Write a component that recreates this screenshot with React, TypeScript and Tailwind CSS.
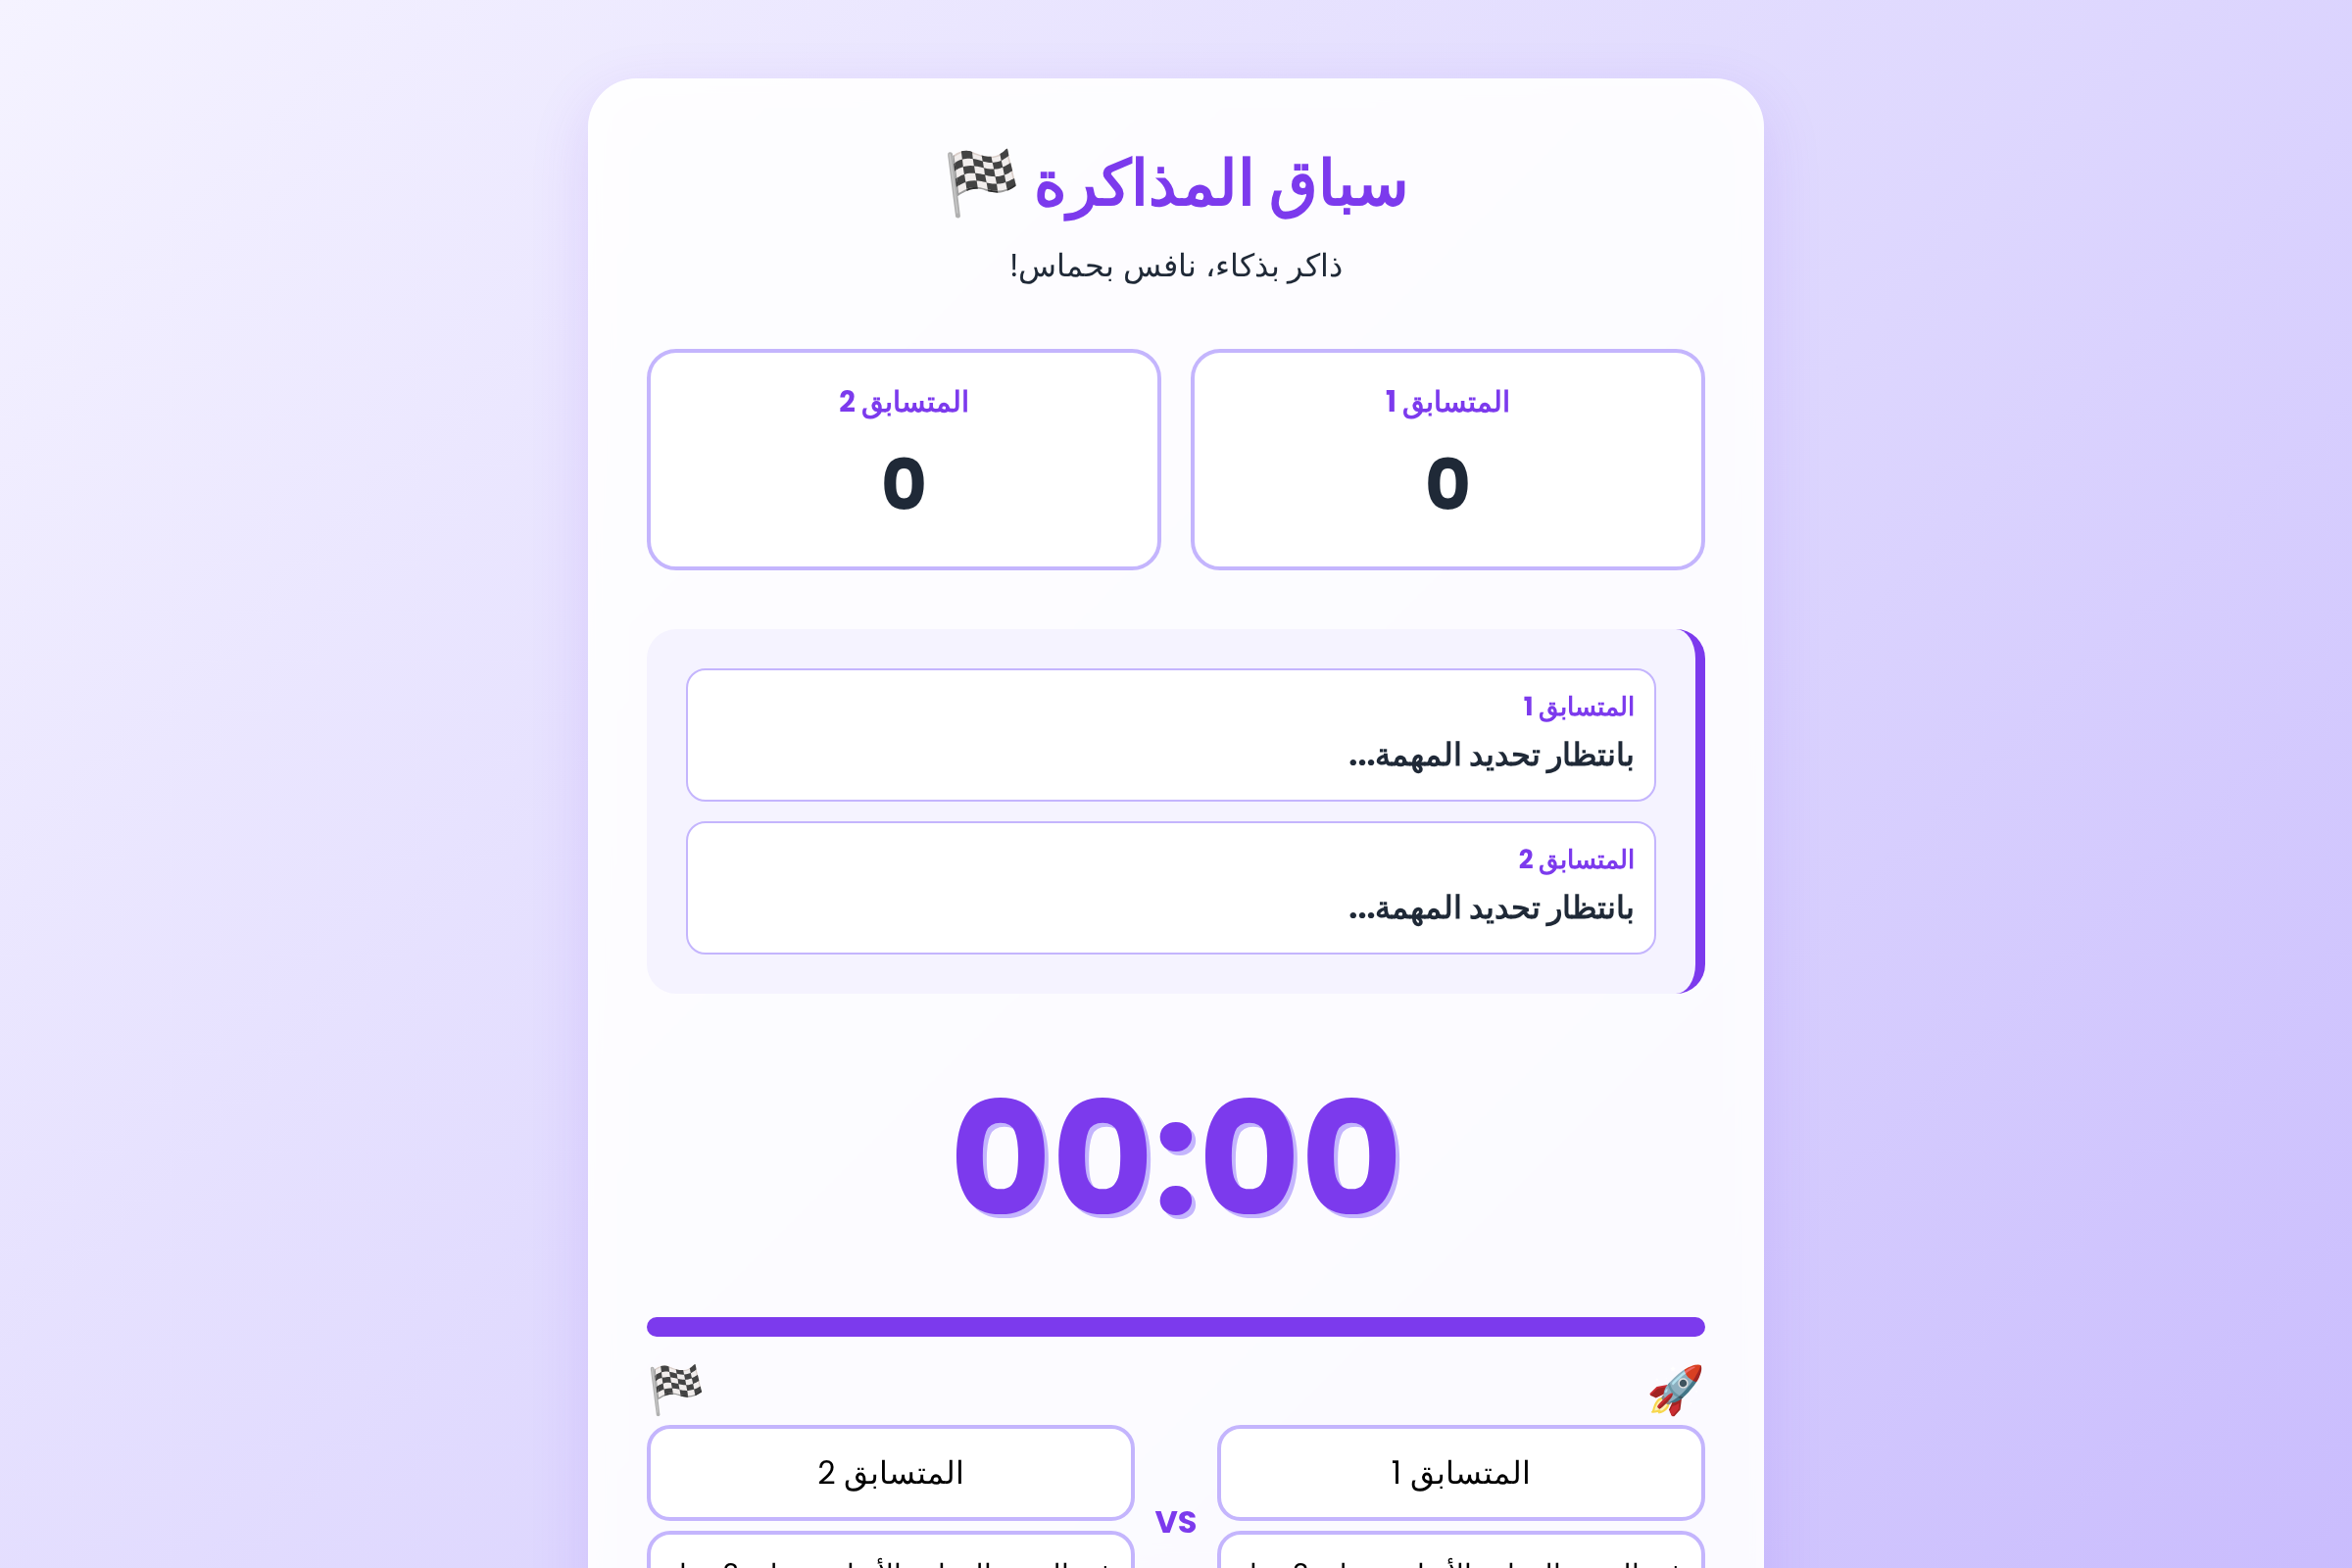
import React from 'react';

interface Player {
  id: number;
  name: string;
  score: number;
  task: string;
}

const players: Player[] = [
  { id: 1, name: 'المتسابق 1', score: 0, task: 'بانتظار تحديد المهمة...' },
  { id: 2, name: 'المتسابق 2', score: 0, task: 'بانتظار تحديد المهمة...' },
];

const PlayerFields: React.FC<{ player: Player }> = ({ player }) => (
  <div className="flex flex-1 min-w-0 flex-col gap-2.5">
    <input
      type="text"
      aria-label={`اسم ${player.name}`}
      defaultValue={player.name}
      className="w-full rounded-3xl border-4 border-[#c4b5fd] bg-white p-5 text-center text-[32px] leading-[50px] text-black"
    />
    <input
      type="text"
      aria-label={`مهام ${player.name}`}
      defaultValue="في المنهج المهارة الأساسية على 3 مهام"
      className="w-full rounded-3xl border-4 border-[#c4b5fd] bg-white p-5 text-[28px] leading-[42px] text-black"
    />
  </div>
);

export default function App() {
  return (
    <div
      dir="rtl"
      lang="ar"
      className="min-h-screen bg-linear-[135deg,#f5f3ff,#ddd6fe_50%,#c4b5fd] px-10 pt-20 pb-96 font-['Poppins',sans-serif] text-[#1f2937]"
    >
      <main className="mx-auto max-w-[1200px] rounded-[50px] bg-white/90 p-[60px] shadow-[0_20px_60px_rgba(124,58,237,0.15),inset_0_0_60px_rgba(255,255,255,0.5)] backdrop-blur-[10px]">
        {/* Title */}
        <header className="mb-[60px] text-center">
          <h1 className="text-[64px] leading-[94px] font-bold text-[#7c3aed]">سباق المذاكرة 🏁</h1>
          <p className="mt-3 text-[32px] leading-[50px]">ذاكر بذكاء، نافس بحماس!</p>
        </header>

        {/* Scores */}
        <section className="mb-[60px] grid grid-cols-2 gap-[30px]">
          {players.map((player) => (
            <div key={player.id} className="rounded-[30px] border-4 border-[#c4b5fd] bg-white p-[30px] text-center">
              <h2 className="text-[29px] leading-10 font-bold text-[#7c3aed]">{player.name}</h2>
              <p className="mt-3 text-[72px] leading-[106px] font-bold">{player.score}</p>
            </div>
          ))}
        </section>

        {/* Current tasks */}
        <section className="mb-10 flex flex-col gap-5 rounded-[30px] border-r-10 border-[#7c3aed] bg-[#f5f3ff] p-10">
          {players.map((player) => (
            <div key={player.id} className="rounded-[20px] border-2 border-[#c4b5fd] bg-white p-5">
              <h3 className="text-[26px] leading-[34px] font-bold text-[#7c3aed]">{player.name}</h3>
              <p className="mt-1.5 text-[32px] leading-[52px] font-bold">{player.task}</p>
            </div>
          ))}
        </section>

        <div className="mb-8 text-center text-[160px] leading-[258px] font-bold text-[#7c3aed] [text-shadow:4px_4px_0_#c4b5fd]">
          00:00
        </div>

        {/* Race track */}
        <div className="h-5 rounded-[10px] bg-[#7c3aed]" />
        <div className="mt-5 flex justify-between text-[48px] leading-[70px]">
          <span>🚀</span>
          <span>🏁</span>
        </div>

        <form className="flex items-center gap-5">
          <PlayerFields player={players[0]} />
          <span className="text-[32px] leading-12 font-bold text-[#7c3aed]">VS</span>
          <PlayerFields player={players[1]} />
        </form>
      </main>
    </div>
  );
}
